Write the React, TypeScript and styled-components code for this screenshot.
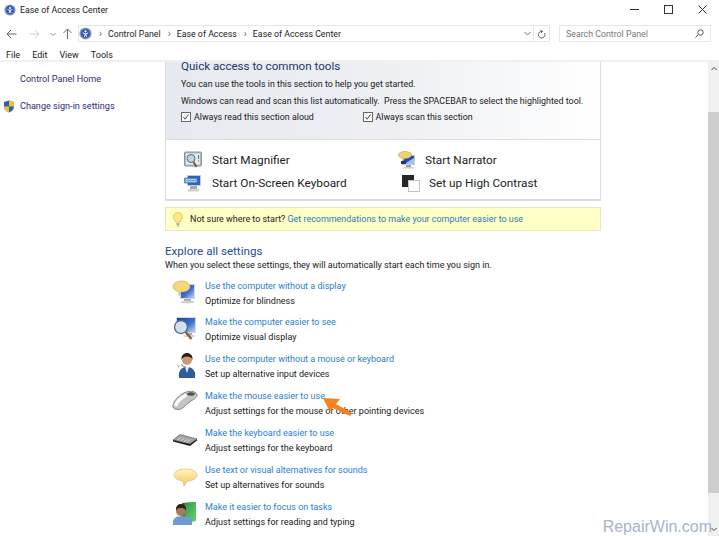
import React from "react";
import styled, { createGlobalStyle } from "styled-components";

const GlobalStyle = createGlobalStyle`
  html, body { margin: 0; padding: 0; background: #fff; }
  body { font-family: Roboto, "Open Sans", sans-serif; color: #1a1a1a; overflow: hidden; }
`;

const Win = styled.div`
  position: relative;
  width: 719px;
  height: 536px;
  overflow: hidden;
  display: flex;
  flex-direction: column;
  background: #fff;
`;

const TitleBar = styled.div`
  height: 19px;
  display: flex;
  align-items: center;
  padding: 0 12px 0 4px;
  font-size: 8.8px;
  gap: 4px;
  flex: none;
`;
const TitleText = styled.div`
  flex: 1;
`;
const WinButtons = styled.div`
  display: flex;
  align-items: center;
  gap: 25px;
`;

const NavBar = styled.div`
  margin-top: 6px;
  height: 17px;
  display: flex;
  align-items: center;
  padding: 0 8px 0 6px;
  flex: none;
`;
const NavArrows = styled.div`
  width: 72px;
  display: grid;
  grid-template-columns: 23px 21px 12px 11px;
  align-items: center;
  flex: none;
`;
const AddressBox = styled.div`
  width: 472px;
  height: 17px;
  box-sizing: border-box;
  border: 1px solid #e6e6e6;
  display: flex;
  align-items: center;
  font-size: 8.8px;
  flex: none;
`;
const Crumb = styled.span`
  margin-left: 7px;
  &::before {
    content: "›";
    color: #666;
    margin-right: 6px;
    font-size: 10px;
  }
`;
const AddressEnd = styled.div`
  margin-left: auto;
  display: flex;
  align-items: center;
  height: 100%;
`;
const Refresh = styled.div`
  width: 15px;
  height: 100%;
  border-left: 1px solid #e6e6e6;
  margin-left: 2px;
  display: flex;
  align-items: center;
  justify-content: center;
`;
const SearchBox = styled.div`
  margin-left: 9px;
  flex: 1;
  height: 17px;
  box-sizing: border-box;
  border: 1px solid #e6e6e6;
  display: flex;
  align-items: center;
  justify-content: space-between;
  padding: 0 6px;
  font-size: 8.8px;
  color: #777;
`;

const MenuBar = styled.div`
  margin-top: 7px;
  height: 11px;
  display: flex;
  align-items: center;
  gap: 12px;
  padding-left: 6px;
  font-size: 9px;
  flex: none;
`;

const Body = styled.div`
  border-top: 2px solid #f0f0f0;
  flex: 1;
  display: flex;
  min-height: 0;
`;

const Sidebar = styled.div`
  width: 165px;
  flex: none;
  padding-top: 10px;
  font-size: 9.1px;
  color: #2b2b7a;
`;
const SideLink = styled.div<{ $shield?: boolean }>`
  display: flex;
  align-items: center;
  gap: 5px;
  height: 14px;
  padding-left: ${(p) => (p.$shield ? "3px" : "20px")};
  margin-bottom: 13px;
`;

const Main = styled.div`
  width: 436px;
  flex: none;
  overflow: hidden;
  display: flex;
  flex-direction: column;
`;

const QuickPanel = styled.div`
  height: 77px;
  flex: none;
  box-sizing: border-box;
  border-left: 1px solid #dedede;
  border-right: 1px solid #dedede;
  background: linear-gradient(90deg, #e6e9ef 0%, #eef0f4 55%, #ffffff 100%);
  padding-left: 15px;
  font-size: 8.9px;
  white-space: nowrap;
`;
const QuickTitle = styled.div`
  font-size: 11.6px;
  line-height: 13px;
  height: 10px;
  color: #22376e;
  margin: -2px 0 6px;
`;
const QuickLine = styled.div`
  height: 16.5px;
  line-height: 16.5px;
`;
const CheckRow = styled.div`
  display: flex;
  height: 16.5px;
  align-items: center;
`;
const CheckItem = styled.div`
  width: 181.5px;
  display: flex;
  align-items: center;
  gap: 3px;
`;
const CheckBox = styled.span`
  width: 10px;
  height: 10px;
  box-sizing: border-box;
  border: 1px solid #666;
  background: #fff;
  display: flex;
  align-items: center;
  justify-content: center;
`;

const ToolsPanel = styled.div`
  height: 62px;
  flex: none;
  box-sizing: border-box;
  border: 1px solid #dedede;
  border-bottom-width: 2px;
  padding: 8px 0 0 18px;
  display: grid;
  grid-template-columns: 214px 1fr;
  grid-auto-rows: 23.5px;
  font-size: 11.8px;
  color: #222;
`;
const Tool = styled.div<{ $indent?: number; $gap?: number }>`
  display: flex;
  align-items: center;
  gap: ${(p) => p.$gap ?? 10}px;
  padding-left: ${(p) => p.$indent ?? 0}px;
  svg {
    filter: blur(0.3px);
  }
`;

const Hint = styled.div`
  margin-top: 6px;
  height: 24px;
  flex: none;
  box-sizing: border-box;
  border: 1px solid #e8e8c0;
  background: #ffffc6;
  display: flex;
  align-items: center;
  padding-left: 7px;
  gap: 7px;
  font-size: 8.95px;
  white-space: nowrap;
  svg {
    filter: blur(0.3px);
  }
`;
const HintLink = styled.span`
  color: #2a7fb8;
`;

const Heading = styled.div`
  margin-top: 13px;
  font-size: 11.6px;
  line-height: 15px;
  color: #1e4c98;
`;
const Sub = styled.div`
  font-size: 9px;
  line-height: 12px;
  white-space: nowrap;
`;

const Rows = styled.div`
  margin-top: 7.5px;
  display: flex;
  flex-direction: column;
  padding-left: 7px;
`;
const Row = styled.div`
  height: 36.9px;
  display: flex;
  gap: 7px;
  flex: none;
`;
const RowIcon = styled.div`
  width: 26px;
  height: 28px;
  flex: none;
  svg {
    display: block;
    filter: blur(0.35px);
  }
`;
const RowText = styled.div`
  font-size: 9px;
  line-height: 15px;
  white-space: nowrap;
`;
const RowLink = styled.div`
  color: #2a7ed2;
`;

const Scroll = styled.div`
  width: 11px;
  margin-left: auto;
  background: #f0f0f0;
  display: flex;
  flex-direction: column;
  flex: none;
`;
const ScrollEnd = styled.div<{ $h: number; $bottom?: boolean }>`
  height: ${(p) => p.$h}px;
  flex: none;
  padding: 4px 0;
  box-sizing: border-box;
  display: flex;
  justify-content: center;
  align-items: ${(p) => (p.$bottom ? "flex-end" : "flex-start")};
`;
const Thumb = styled.div`
  height: 381px;
  flex: none;
  background: #cdcdcd;
`;

const Arrow = styled.svg`
  position: absolute;
  left: 322px;
  top: 396px;
`;
const Watermark = styled.div`
  position: absolute;
  right: 7px;
  bottom: 0;
  font-family: "Liberation Sans", Arial, sans-serif;
  font-size: 16px;
  line-height: 18px;
  color: #a3b4cf;
`;

const EaseIcon = ({ s = 12 }: { s?: number }) => (
  <svg width={s} height={s} viewBox="0 0 12 12">
    <circle cx="6" cy="6" r="5.6" fill="#8d97ad" />
    <circle cx="6" cy="6" r="4.2" fill="#2f56c4" />
    <circle cx="6" cy="4" r="1" fill="#fff" />
    <path d="M3.5 5.5 6 6.400 8.500 5.500M6 6.400 5 9M6 6.400 7 9" stroke="#fff" strokeWidth="0.9" fill="none" />
  </svg>
);

const Shield = () => (
  <svg width="12" height="13" viewBox="0 0 12 13">
    <path d="M6 .5 11 2v4.500c0 3-2.200 5-5 6-2.800-1-5-3-5-6V2z" fill="#2d5fb5" />
    <path d="M6 .5 11 2v4.500H6zM6 6.500v6c-2.800-1-5-3-5-6z" fill="#f4c22b" />
  </svg>
);

const MagnifierTool = () => (
  <svg width="18" height="18" viewBox="0 0 18 18">
    <rect x=".5" y="1" width="17" height="14" rx="1" fill="#b4bac0" stroke="#8a9098" />
    <rect x="2" y="2.500" width="14" height="11" fill="#e6ebef" />
    <circle cx="7" cy="7.500" r="4" fill="#bcd6ea" stroke="#5b6a78" />
    <path d="m9.500 11 3 5" stroke="#7a5a3a" strokeWidth="2" />
    <path d="M14.500 4v4" stroke="#2f9a8c" strokeWidth="1.200" />
    <path d="M14.500 9v2" stroke="#c9a24a" strokeWidth="1.200" />
  </svg>
);

const NarratorTool = () => (
  <svg width="18" height="18" viewBox="0 0 18 18">
    <path d="M4 4h13v10H4z" fill="#c9ced4" />
    <path d="M5 5h11v8H5z" fill="#2647b0" />
    <path d="M6 13l10-6v6z" fill="#9fc1ea" />
    <path d="M8 14h5v2H8z" fill="#a0a0a0" />
    <path d="M6 16h9l1 1.500H5z" fill="#cdcdcd" />
    <ellipse cx="7" cy="4" rx="6.500" ry="3.500" fill="#f0d274" stroke="#b59a4a" strokeWidth=".6" />
    <path d="M4 7l1 3 2-2.500z" fill="#e6c65f" />
    <path d="M3 10h5v3H3z" fill="#1c2f80" />
  </svg>
);

const KeyboardTool = () => (
  <svg width="18" height="18" viewBox="0 0 18 18">
    <path d="M3 1h14v11H3z" fill="#c8ccd2" />
    <path d="M4 2h12v9H4z" fill="#2a62c0" />
    <path d="M6 12h7v3H6z" fill="#a8a8a8" />
    <path d="M4 15h11v2.500H4z" fill="#d2d2d2" />
    <path d="M.5 4h13v5H.5z" fill="#6fa8e0" stroke="#2c5aa0" strokeWidth=".6" />
    <path d="M2 5.500h10M2 7.500h10" stroke="#dcecff" strokeWidth=".8" strokeDasharray="1 .6" />
  </svg>
);

const ContrastTool = () => (
  <svg width="18" height="17" viewBox="0 0 18 17">
    <rect x="0" y="0" width="12" height="12" fill="#262626" />
    <rect x="6.500" y="5.500" width="11" height="11" fill="#fff" stroke="#c4c4c4" />
  </svg>
);

const Bulb = () => (
  <svg width="10" height="15" viewBox="0 0 10 15">
    <path d="M5 .5C2.400.5.500 2.300.500 4.800c0 2.100 1.800 3.200 2.200 5.200h4.600c.4-2 2.200-3.100 2.200-5.200C9.500 2.300 7.600.5 5 .5z" fill="#fbe88a" stroke="#e0b63c" strokeWidth=".7" />
    <path d="M3.200 11h3.600v2H3.200z" fill="#c0b9a0" />
    <path d="M4 13.500h2v1H4z" fill="#998f78" />
  </svg>
);

const IconFrame = ({ children }: { children: React.ReactNode }) => (
  <svg width="26" height="28" viewBox="0 0 26 28">
    {children}
  </svg>
);

const Screen = () => (
  <linearGradient id="scr" x1="0" y1="0" x2="1" y2="1">
    <stop offset="0" stopColor="#1b3aa8" />
    <stop offset=".55" stopColor="#3c6fd0" />
    <stop offset="1" stopColor="#bcd8f4" />
  </linearGradient>
);

const DisplayIcon = () => (
  <IconFrame>
    <defs>
      <Screen />
    </defs>
    <path d="M8 5h15v15H8z" fill="#d4d8dc" />
    <path d="M9 6h13v13H9z" fill="url(#scr)" />
    <path d="M12 20h7v2h-7z" fill="#a8a8a8" />
    <ellipse cx="15.500" cy="23" rx="7" ry="1.400" fill="#cfcfcf" />
    <path d="M1 7.500C1 4.500 5 2 9.500 2S18 4.500 18 7.500 14.500 13 10 13H9l-2 3.500L7 12.500C3.500 12 1 10 1 7.500z" fill="#f4d878" stroke="#bfa04c" strokeWidth=".6" />
  </IconFrame>
);

const SeeIcon = () => (
  <IconFrame>
    <defs>
      <Screen />
    </defs>
    <path d="M4 2h20v16H4z" fill="#d4d8dc" />
    <path d="M5 3h18v14H5z" fill="url(#scr)" />
    <path d="M14 18h6v2h-6z" fill="#a8a8a8" />
    <ellipse cx="17" cy="21" rx="6" ry="1.300" fill="#d2d2d2" />
    <circle cx="9" cy="12" r="6.500" fill="#cfe0ee" stroke="#55677a" strokeWidth="1.300" />
    <path d="M13.500 17l6 7" stroke="#8a623c" strokeWidth="2.400" />
  </IconFrame>
);

const PersonIcon = () => (
  <IconFrame>
    <path d="M7 26c-1-7 2-11 8-11s9 4 8 11z" fill="#2f5c9c" />
    <path d="M13 15h4l-2 6z" fill="#e8eef6" />
    <circle cx="15" cy="8" r="5" fill="#c89a78" />
    <path d="M9.500 8C9 3 12 1 15 1s6 2 5.500 7c-1-3-3-3.500-5.500-3.500S10.500 5 9.500 8z" fill="#2a201c" />
    <path d="M4 12.500l3.500 1-1 2.500z" fill="#e6b89a" />
    <path d="M9 12c1 2 3 3 5 3" stroke="#333" strokeWidth=".7" fill="none" />
  </IconFrame>
);

const MouseIcon = () => (
  <IconFrame>
    <path d="M1 18C0 14 6 6 14 3c5-1.500 10-.5 11 2.500 1 3-4 5-8 8-4 3-6 7-11 7-3 0-5-1.500-5-2.500z" fill="#c4c4c4" stroke="#666" strokeWidth=".7" />
    <path d="M3.500 17c1-4 6-9 11-11" stroke="#fafafa" strokeWidth="3.500" fill="none" />
    <ellipse cx="19" cy="5" rx="3.800" ry="1.700" fill="#4e4e4e" />
  </IconFrame>
);

const KeyboardIcon = () => (
  <IconFrame>
    <path d="M1 14 8 8.500 25 13l-7 5z" fill="#a2a2a2" stroke="#555" strokeWidth=".6" />
    <path d="M1 14v1.500l17 4.500 7-5.500V13l-7 5z" fill="#1f1f1f" />
    <path d="M5.500 14l4-3M8.500 15l4-3M11.500 16l4-3M14.500 16.500l4-3" stroke="#e0e0e0" strokeWidth=".9" />
  </IconFrame>
);

const BubbleIcon = () => (
  <IconFrame>
    <defs>
      <linearGradient id="bub" x1="0" y1="0" x2="0" y2="1">
        <stop offset="0" stopColor="#fff2bd" />
        <stop offset="1" stopColor="#f2c95e" />
      </linearGradient>
    </defs>
    <path d="M2 12c0-3.500 5-6 11.500-6S25 8.500 25 12s-4.500 6-10 6.200L12 23l-1-5c-5-.5-9-3-9-6z" fill="url(#bub)" stroke="#cdb86a" strokeWidth=".6" />
  </IconFrame>
);

const FocusIcon = () => (
  <IconFrame>
    <defs>
      <linearGradient id="bk" x1="0" y1="0" x2="1" y2="1">
        <stop offset="0" stopColor="#2f9a44" />
        <stop offset="1" stopColor="#6dd07a" />
      </linearGradient>
    </defs>
    <path d="M10 3 24 2v19l-14 1z" fill="#1f7d34" />
    <path d="M13 3 24 2v19l-11 1z" fill="url(#bk)" />
    <path d="M1 25c-1-6 2-9 9.500-9S21 19 20 25z" fill="#6c9bd2" />
    <circle cx="9" cy="11" r="5" fill="#a87a58" />
    <path d="M4 11C3.500 5.500 6.500 4 9 4s5.500 1.500 5 7c-1-3-3-3-5-3s-4 0-5 3z" fill="#2a201c" />
  </IconFrame>
);

const settings = [
  { icon: <DisplayIcon />, link: "Use the computer without a display", desc: "Optimize for blindness" },
  { icon: <SeeIcon />, link: "Make the computer easier to see", desc: "Optimize visual display" },
  { icon: <PersonIcon />, link: "Use the computer without a mouse or keyboard", desc: "Set up alternative input devices" },
  { icon: <MouseIcon />, link: "Make the mouse easier to use", desc: "Adjust settings for the mouse or other pointing devices" },
  { icon: <KeyboardIcon />, link: "Make the keyboard easier to use", desc: "Adjust settings for the keyboard" },
  { icon: <BubbleIcon />, link: "Use text or visual alternatives for sounds", desc: "Set up alternatives for sounds" },
  { icon: <FocusIcon />, link: "Make it easier to focus on tasks", desc: "Adjust settings for reading and typing" },
];

const Tick = () => (
  <svg width="8" height="8" viewBox="0 0 9 9">
    <path d="M1.500 4.500 3.500 7 7.500 1.500" stroke="#333" strokeWidth="1" fill="none" />
  </svg>
);

export default function App() {
  return (
    <>
      <GlobalStyle />
      <Win>
        <TitleBar>
          <EaseIcon />
          <TitleText>Ease of Access Center</TitleText>
          <WinButtons>
            <svg width="9" height="9" viewBox="0 0 9 9"><path d="M0 4.500h9" stroke="#333" /></svg>
            <svg width="9" height="9" viewBox="0 0 9 9"><rect x=".5" y=".5" width="8" height="8" fill="none" stroke="#333" /></svg>
            <svg width="9" height="9" viewBox="0 0 9 9"><path d="M.5.500l8 8M8.500.500l-8 8" stroke="#333" /></svg>
          </WinButtons>
        </TitleBar>
        <NavBar>
          <NavArrows>
            <svg width="11" height="10" viewBox="0 0 11 10"><path d="M10.500 5H1M5 1 1 5l4 4" stroke="#666" fill="none" /></svg>
            <svg width="11" height="10" viewBox="0 0 11 10"><path d="M.5 5H10M6 1l4 4-4 4" stroke="#ccc" fill="none" /></svg>
            <svg width="6" height="6" viewBox="0 0 6 6"><path d="M.5 2 3 4.500 5.500 2" stroke="#888" fill="none" /></svg>
            <svg width="11" height="11" viewBox="0 0 11 11"><path d="M5.500 11V1M1.500 5l4-4 4 4" stroke="#666" fill="none" /></svg>
          </NavArrows>
          <AddressBox>
            <EaseIcon s={13} />
            <Crumb>Control Panel</Crumb>
            <Crumb>Ease of Access</Crumb>
            <Crumb>Ease of Access Center</Crumb>
            <AddressEnd>
              <svg width="7" height="5" viewBox="0 0 7 5"><path d="M.5 1 3.500 4l3-3" stroke="#777" fill="none" /></svg>
              <Refresh>
                <svg width="9" height="10" viewBox="0 0 9 10"><path d="M7.500 4a3.300 3.300 0 1 1-2-1.500M3.500 1l2 1.500L4 4" stroke="#666" fill="none" /></svg>
              </Refresh>
            </AddressEnd>
          </AddressBox>
          <SearchBox>
            Search Control Panel
            <svg width="9" height="9" viewBox="0 0 9 9"><circle cx="5.500" cy="3.500" r="2.700" fill="none" stroke="#555" /><path d="M3.500 5.500 .5 8.500" stroke="#555" /></svg>
          </SearchBox>
        </NavBar>
        <MenuBar>
          <span>File</span>
          <span>Edit</span>
          <span>View</span>
          <span>Tools</span>
        </MenuBar>
        <Body>
          <Sidebar>
            <SideLink>Control Panel Home</SideLink>
            <SideLink $shield>
              <Shield />
              Change sign-in settings
            </SideLink>
          </Sidebar>
          <Main>
            <QuickPanel>
              <QuickTitle>Quick access to common tools</QuickTitle>
              <QuickLine>You can use the tools in this section to help you get started.</QuickLine>
              <QuickLine>Windows can read and scan this list automatically.&nbsp; Press the SPACEBAR to select the highlighted tool.</QuickLine>
              <CheckRow>
                <CheckItem>
                  <CheckBox><Tick /></CheckBox>
                  Always read this section aloud
                </CheckItem>
                <CheckItem>
                  <CheckBox><Tick /></CheckBox>
                  Always scan this section
                </CheckItem>
              </CheckRow>
            </QuickPanel>
            <ToolsPanel>
              <Tool><MagnifierTool />Start Magnifier</Tool>
              <Tool $gap={9}><NarratorTool />Start Narrator</Tool>
              <Tool><KeyboardTool />Start On-Screen Keyboard</Tool>
              <Tool $indent={4} $gap={9}><ContrastTool />Set up High Contrast</Tool>
            </ToolsPanel>
            <Hint>
              <Bulb />
              <span>
                Not sure where to start? <HintLink>Get recommendations to make your computer easier to use</HintLink>
              </span>
            </Hint>
            <Heading>Explore all settings</Heading>
            <Sub>When you select these settings, they will automatically start each time you sign in.</Sub>
            <Rows>
              {settings.map((s) => (
                <Row key={s.link}>
                  <RowIcon>{s.icon}</RowIcon>
                  <RowText>
                    <RowLink>{s.link}</RowLink>
                    <div>{s.desc}</div>
                  </RowText>
                </Row>
              ))}
            </Rows>
          </Main>
          <Scroll>
            <ScrollEnd $h={50}>
              <svg width="6" height="5" viewBox="0 0 6 5"><path d="M.5 4 3 1.500 5.500 4" stroke="#444" fill="none" /></svg>
            </ScrollEnd>
            <Thumb />
            <ScrollEnd $h={43} $bottom>
              <svg width="6" height="5" viewBox="0 0 6 5"><path d="M.5 1 3 3.500 5.500 1" stroke="#444" fill="none" /></svg>
            </ScrollEnd>
          </Scroll>
        </Body>
        <Arrow width="32" height="22" viewBox="0 0 32 22">
          <path d="M1 2 18 3 14 8 30 17 28 20 11 12 8 16z" fill="#f58220" />
        </Arrow>
        <Watermark>RepairWin.com</Watermark>
      </Win>
    </>
  );
}
